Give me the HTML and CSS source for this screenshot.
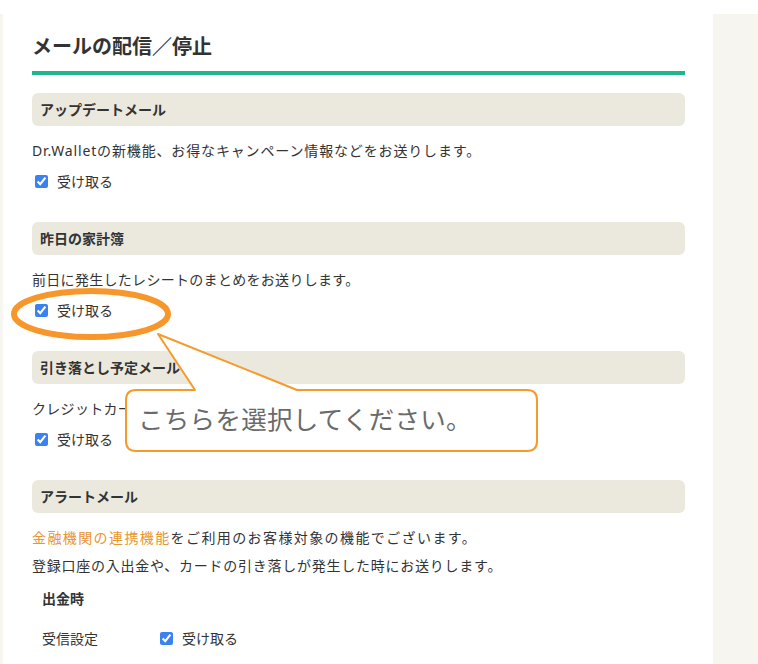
FILE: index.html
```html
<!DOCTYPE html>
<html lang="ja">
<head>
    <meta charset="UTF-8">
    <meta name="viewport" content="width=device-width, initial-scale=1.0">
    <title>メールの配信／停止</title>
    <link rel="stylesheet" href="styles.css">
</head>
<body>
    <div class="layout">
        <div class="gutter"></div>

        <div class="main">
            <h1 class="page-title">メールの配信／停止</h1>

            <div class="mail-section">
                <h2 class="section-header">アップデートメール</h2>
                <p class="desc desc-wide">Dr.Walletの新機能、お得なキャンペーン情報などをお送りします。</p>
                <label class="check-row"><input type="checkbox" checked> 受け取る</label>
            </div>

            <div class="mail-section">
                <h2 class="section-header">昨日の家計簿</h2>
                <p class="desc">前日に発生したレシートのまとめをお送りします。</p>
                <label class="check-row"><input type="checkbox" checked> 受け取る</label>
            </div>

            <div class="mail-section">
                <h2 class="section-header">引き落とし予定メール</h2>
                <p class="desc">クレジットカードの引き落とし予定をお送りします。</p>
                <label class="check-row"><input type="checkbox" checked> 受け取る</label>
            </div>

            <div class="mail-section">
                <h2 class="section-header">アラートメール</h2>
                <div class="desc-block">
                    <p class="alert-line1"><a href="#" class="link">金融機関の連携機能</a>をご利用のお客様対象の機能でございます。</p>
                    <p class="alert-line2">登録口座の入出金や、カードの引き落しが発生した時にお送りします。</p>
                </div>
                <h3 class="sub-title">出金時</h3>
                <div class="setting-row">
                    <span class="setting-label">受信設定</span>
                    <label class="check-row inline"><input type="checkbox" checked> 受け取る</label>
                </div>
            </div>
        </div>

        <div class="aside"></div>
    </div>

    <!-- 案内の吹き出し -->
    <svg class="annotation" width="758" height="664" viewBox="0 0 758 664">
        <path d="M136,390 L195,390 L158,334 L297,390 L527,390 Q537,390 537,400 L537,441 Q537,451 527,451 L136,451 Q126,451 126,441 L126,400 Q126,390 136,390 Z"
              fill="#fff" stroke="#f59a2b" stroke-width="2" stroke-linejoin="round"/>
        <ellipse cx="91" cy="314" rx="77" ry="23" fill="none" stroke="#f7962a" stroke-width="6"/>
    </svg>
    <div class="callout-text">こちらを選択してください。</div>
</body>
</html>
```

FILE: styles.css
```css
:root {
    --text-color: #333;
    --green-color: #1fb58f;
    --header-bg: #ebe8de;
    --panel-bg: #f6f5f0;
    --orange-color: #e8962e;
}

* {
    margin: 0;
    padding: 0;
    box-sizing: border-box;
}

body {
    font-family: "Noto Sans", "Noto Sans CJK JP", sans-serif;
    color: var(--text-color);
    background-color: white;
    font-size: 14px;
    width: 758px;
    height: 664px;
    overflow: hidden;
    position: relative;
}

.layout {
    display: flex;
    height: 664px;
}

.gutter {
    width: 3px;
    margin-top: 14px;
    background-color: var(--panel-bg);
}

.main {
    width: 710px;
    padding: 33px 28px 0 29px;
}

.aside {
    flex: 1;
    margin-top: 14px;
    background-color: var(--panel-bg);
}

.page-title {
    font-size: 20px;
    font-weight: 700;
    line-height: 28px;
    padding-bottom: 10px;
    border-bottom: 4px solid var(--green-color);
    margin-bottom: 18px;
}

.mail-section {
    margin-bottom: 27px;
}

.section-header {
    height: 33px;
    line-height: 33px;
    padding: 0 8px;
    font-size: 14px;
    font-weight: 700;
    background-color: var(--header-bg);
    border-radius: 6px;
}

.desc {
    margin-top: 11px;
    line-height: 28px;
    letter-spacing: 0.3px;
}

.desc-wide {
    letter-spacing: 0.85px;
}

.desc-block {
    margin-top: 11px;
    line-height: 28px;
}

.alert-line1 {
    letter-spacing: 1.4px;
}

.alert-line2 {
    letter-spacing: 0.75px;
}

.link {
    color: var(--orange-color);
    text-decoration: none;
}

.check-row {
    display: flex;
    align-items: center;
    gap: 9px;
    margin-top: 2px;
    height: 28px;
    padding-left: 3px;
}

.check-row input {
    width: 13px;
    height: 13px;
    margin: 0;
    accent-color: #3b82f0;
}

.check-row.inline {
    margin-top: 0;
    padding-left: 0;
}

.sub-title {
    font-size: 14px;
    font-weight: 700;
    line-height: 28px;
    margin-top: 5px;
    padding-left: 10px;
}

.setting-row {
    display: flex;
    align-items: center;
    margin-top: 11px;
    height: 28px;
    padding-left: 10px;
}

.setting-label {
    width: 118px;
}

.annotation {
    position: absolute;
    left: 0;
    top: 0;
    pointer-events: none;
}

.callout-text {
    position: absolute;
    left: 126px;
    top: 390px;
    width: 411px;
    height: 61px;
    line-height: 58px;
    padding-left: 12px;
    font-size: 25.5px;
    letter-spacing: 0.3px;
    color: #6a6a6a;
}
```
